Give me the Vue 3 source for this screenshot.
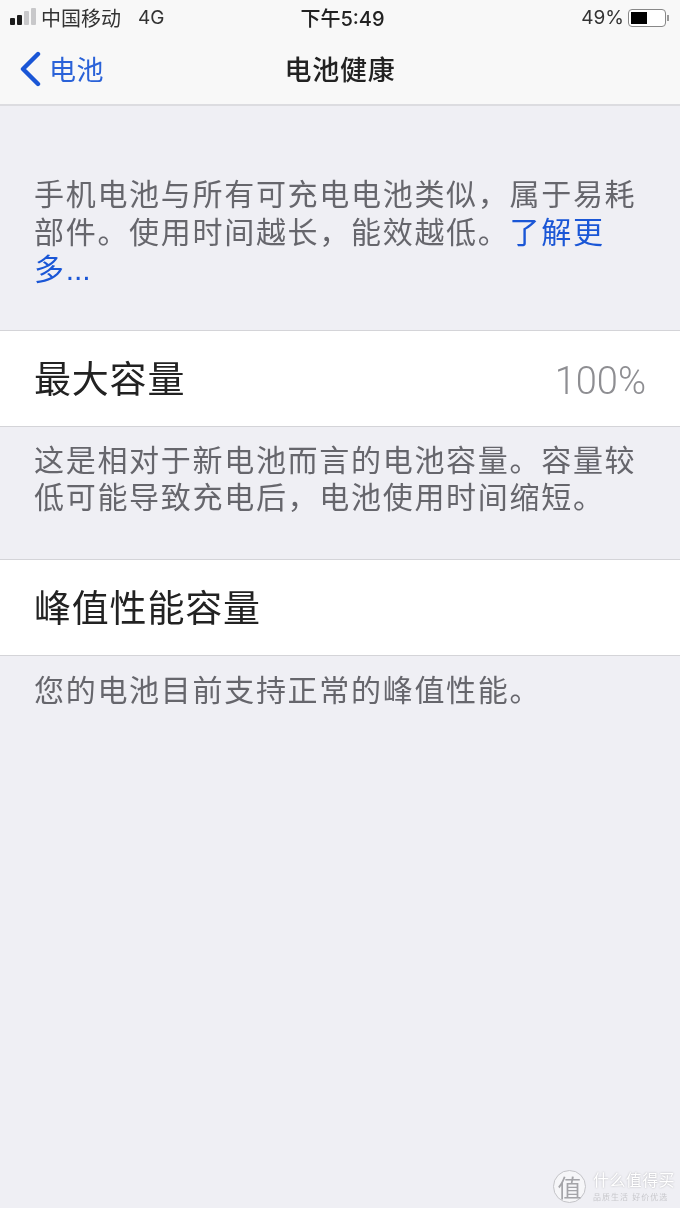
<template>
  <div class="phone">
    <header class="top">
      <div class="status">
        <div class="status-left">
          <span class="signal">
            <i class="on" style="height: 7px"></i>
            <i class="on" style="height: 10px"></i>
            <i style="height: 14px"></i>
            <i style="height: 17px"></i>
          </span>
          <span class="carrier">中国移动</span>
          <span class="net">4G</span>
        </div>
        <div class="clock">下午5:49</div>
        <div class="status-right">
          <span class="pct">49%</span>
          <span class="battery"><b></b></span>
          <span class="nub"></span>
        </div>
      </div>
      <div class="nav">
        <div class="back">
          <svg width="24" height="36" viewBox="0 0 24 36">
            <path d="M20 3 L5 18 L20 33" fill="none" stroke="#1a56d6" stroke-width="4.4" stroke-linecap="round" stroke-linejoin="round" />
          </svg>
          <span>电池</span>
        </div>
        <div class="title">电池健康</div>
      </div>
    </header>

    <p class="intro">手机电池与所有可充电电池类似，属于易耗部件。使用时间越长，能效越低。<span class="link">了解更多<span class="dots">...</span></span></p>

    <div class="row">
      <span>最大容量</span>
      <span class="val">100%</span>
    </div>
    <p class="note">这是相对于新电池而言的电池容量。容量较低可能导致充电后，电池使用时间缩短。</p>

    <div class="row row-2">
      <span>峰值性能容量</span>
    </div>
    <p class="note note-2">您的电池目前支持正常的峰值性能。</p>

    <div class="mark">
      <span class="mark-logo">值</span>
      <div class="mark-text">
        <div class="mark-name">什么值得买</div>
        <div class="mark-sub">品质生活 好价优选</div>
      </div>
    </div>
  </div>
</template>

<script setup>
</script>

<style>
body {
  margin: 0;
}
</style>

<style scoped>
.phone {
  position: relative;
  width: 680px;
  height: 1208px;
  overflow: hidden;
  background: #efeff4;
  font-family: "Liberation Sans", "Noto Sans CJK SC", sans-serif;
  color: #1c1c1e;
  filter: blur(0.4px);
}

.top {
  height: 104px;
  background: #f8f8f8;
  border-bottom: 2px solid #dcdce0;
}

.status {
  display: grid;
  grid-template-columns: 1fr auto 1fr;
  align-items: center;
  height: 35px;
  padding: 0 11px 0 10px;
  font-family: Inter, "Noto Sans CJK SC", sans-serif;
  font-size: 20px;
  color: #333;
}

.status-left {
  display: flex;
  align-items: center;
}

.signal {
  display: flex;
  align-items: flex-end;
  gap: 2px;
  height: 17px;
  margin: 0 5px 3px 0;
}

.signal i {
  width: 5px;
  background: #c8c8ca;
  border-radius: 1px;
}

.signal .on {
  background: #1c1c1c;
}

.net {
  margin-left: 17px;
  font-size: 19px;
}

.clock {
  margin-left: 6px;
  color: #222;
  font-weight: 500;
  font-size: 20px;
}

.status-right {
  display: flex;
  align-items: center;
  justify-content: flex-end;
}

.pct {
  margin-right: 4px;
  font-size: 19px;
}

.battery {
  box-sizing: border-box;
  width: 38px;
  height: 18px;
  padding: 2px;
  border: 1.5px solid #888;
  border-radius: 4px;
  background: #fff;
}

.battery b {
  display: block;
  width: 16px;
  height: 100%;
  background: #000;
}

.nub {
  width: 2px;
  height: 6px;
  margin-left: 1px;
  background: #999;
}

.nav {
  position: relative;
  display: flex;
  align-items: center;
  justify-content: center;
  height: 69px;
}

.back {
  position: absolute;
  left: 18px;
  top: 14px;
  display: flex;
  align-items: center;
  gap: 7px;
  font-size: 27px;
  letter-spacing: 0.5px;
  color: #2a62d8;
}

.title {
  margin-top: -2px;
  font-size: 27px;
  font-weight: 500;
  letter-spacing: 0.7px;
  color: #222;
}

.intro {
  margin: 0;
  padding: 70px 34px 0;
  height: 154px;
  font-size: 30px;
  line-height: 37.5px;
  letter-spacing: 1.7px;
  color: #66666c;
}

.link {
  color: #1a56d6;
}

.dots {
  letter-spacing: 0;
}

.row {
  display: flex;
  justify-content: space-between;
  align-items: center;
  box-sizing: border-box;
  height: 97px;
  padding: 4px 34px 0;
  background: #fff;
  border-top: 1px solid #d4d4d8;
  border-bottom: 1px solid #d4d4d8;
  font-size: 37px;
  line-height: 44px;
  letter-spacing: 0.8px;
  color: #222;
}

.val {
  font-family: Roboto, sans-serif;
  font-size: 38px;
  font-weight: 300;
  color: #8e8e92;
  letter-spacing: 0;
}

.note {
  margin: 0;
  height: 132px;
  padding: 15px 34px 0;
  box-sizing: border-box;
  font-size: 30px;
  line-height: 37px;
  letter-spacing: 1.7px;
  color: #66666c;
}

.note-2 {
  padding-top: 16px;
}

.mark {
  position: absolute;
  right: 5px;
  bottom: 5px;
  display: flex;
  align-items: center;
  gap: 7px;
  color: #fff;
}

.mark-logo {
  display: flex;
  align-items: center;
  justify-content: center;
  box-sizing: border-box;
  width: 33px;
  height: 33px;
  border-radius: 50%;
  background: #f6f6f8;
  border: 1px solid #c4c4c8;
  color: #a4a4a8;
  font-size: 24px;
}

.mark-name {
  font-size: 16px;
  line-height: 20px;
  letter-spacing: 0.4px;
  text-shadow: 0 0 2px #b0b0b4;
}

.mark-sub {
  margin-top: 2px;
  font-size: 8px;
  line-height: 10px;
  letter-spacing: 1px;
  color: #c8c8cc;
}
</style>
